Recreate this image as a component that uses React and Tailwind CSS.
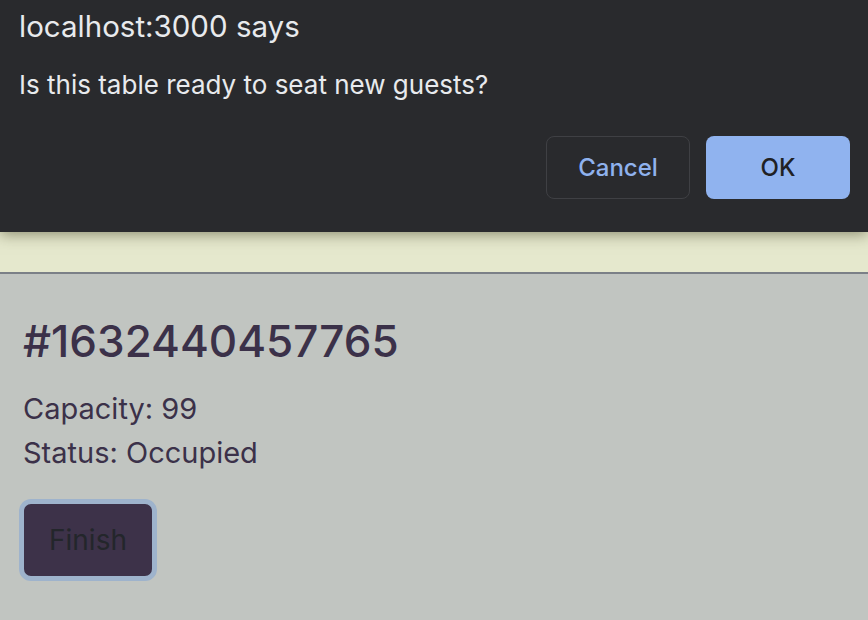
import React from "react";

export default function App() {
  return (
    <div className="relative w-[868px] h-[620px] overflow-hidden bg-[#c1c5c1] font-['Inter','Noto_Sans',sans-serif]">
      {/* page behind the confirm dialog */}
      <div className="h-[40px] mt-[232px] bg-[#e5e8cd]" />
      <div className="h-[2px] bg-[#7b8087]" />
      <div className="px-[23px] pt-[40px] text-[#3b3149]">
        <h1 className="text-[44px] leading-[54px] font-medium">#1632440457765</h1>
        <div className="mt-[19px] text-[29px] leading-[44px]">
          <p>Capacity: 99</p>
          <p>Status: Occupied</p>
        </div>
        <button
          type="button"
          className="mt-[24px] -ml-[4px] w-[138px] h-[82px] rounded-[12px] bg-[#3d3249] border-[5px] border-[#9eb3cc] text-[28px] text-[#23262b]"
        >
          Finish
        </button>
      </div>

      {/* browser confirm() dialog */}
      <div className="absolute top-0 left-0 w-full h-[232px] bg-[#292a2d] shadow-[0_2px_14px_rgba(60,60,30,0.55)] px-[19px] text-[#e8eaed]">
        <div className="pt-[8px] text-[29.5px] leading-[36px]">localhost:3000 says</div>
        <div className="mt-[26px] text-[26px] leading-[30px]">Is this table ready to seat new guests?</div>
        <div className="flex justify-end gap-[16px] mt-[36px] mr-[-1px]">
          <button
            type="button"
            className="w-[144px] h-[63px] rounded-[8px] border border-[#3f4044] text-[#8fb2ee] text-[24px] font-medium"
          >
            Cancel
          </button>
          <button
            type="button"
            className="w-[144px] h-[63px] rounded-[8px] bg-[#90b3ef] text-[#202124] text-[24px] font-medium"
          >
            OK
          </button>
        </div>
      </div>
    </div>
  );
}
